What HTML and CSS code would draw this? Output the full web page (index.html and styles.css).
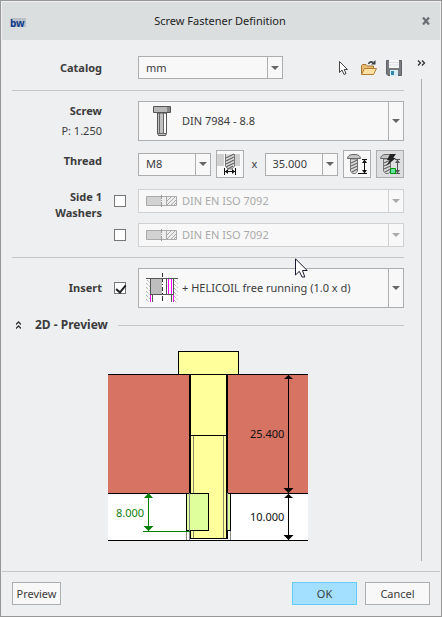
FILE: index.html
```html
<!DOCTYPE html>
<html lang="en">
<head>
<meta charset="utf-8">
<title>Screw Fastener Definition</title>
<link rel="stylesheet" href="styles.css">
</head>
<body>
<form class="dialog">
  <header class="titlebar">
    <svg class="logo" viewBox="0 0 20 14" role="img" aria-label="bw"><rect x="1" y="2" width="15" height="9" fill="#b9bfc6"/><text x="0" y="11" class="logo-text">bw</text></svg>
    <h1 class="title">Screw Fastener Definition</h1>
    <button type="button" class="plain close" aria-label="Close"><svg width="8" height="8" viewBox="0 0 8 8"><path d="M1 .5L7 7.5M7 .5L1 7.5" stroke="#6c6c74" stroke-width="2.2"/></svg></button>
  </header>

  <div class="content">
    <main class="fields">
      <div class="row row-catalog">
        <label class="label" for="catalog">Catalog</label>
        <div class="controls spread">
          <div class="combo combo-catalog"><select id="catalog"><option>mm</option></select></div>
          <div class="tools">
            <button type="button" class="plain" aria-label="Select"><svg width="16" height="16" viewBox="0 0 16 16"><path d="M3.5 1.5V12.5L6 10L8 14.5L10 13.5L8.2 9.5H11.5Z" fill="#fff" stroke="#444"/></svg></button>
            <button type="button" class="plain" aria-label="Open"><svg width="18" height="16" viewBox="0 0 18 16"><path d="M1.5 14V5.5L2.5 4.5H6L7.5 6H13.5V8" fill="#e5bd73" stroke="#a8752f"/><path d="M1.5 14.5L4.5 8.5H16.5L13.5 14.5Z" fill="#ffe0a0" stroke="#b27e38"/><path d="M8.5 4Q10 .7 13 2.5" fill="none" stroke="#3c414a" stroke-width="1.6"/><path d="M11 4.5H15.5V0Z" fill="#3c414a"/></svg></button>
            <button type="button" class="plain" aria-label="Save"><svg width="16" height="16" viewBox="0 0 16 16"><path d="M.5 .5H15.5V15.5H2L.5 14Z" fill="#777b80" stroke="#5e6266"/><rect x="3" y="0" width="10" height="8" fill="#f5f6f7"/><path d="M3 2.5H13M3 5H13" stroke="#dce1e4"/><rect x="4" y="10" width="8" height="6" fill="#d9edf5"/><rect x="5" y="11" width="3" height="4" fill="#3289ad"/></svg></button>
          </div>
        </div>
      </div>

      <hr class="rule">

      <div class="row row-screw">
        <div class="label"><label for="screw">Screw</label><span class="pitch">P: 1.250</span></div>
        <div class="controls">
          <div class="combo tall with-icon">
            <svg class="combo-icon screw-icon" viewBox="0 0 32 32"><path d="M7.5 1.5H24.5V7.5H7.5Z" fill="#b8b8b8" stroke="#555"/><path d="M21 2H24V7H21Z" fill="#888"/><path d="M11.500 8V28.500L12.500 30.500H19.500L20.500 28.500V8Z" fill="#c0c0c0" stroke="#555"/><path d="M18 9H20V28H18Z" fill="#fff"/><path d="M17.500 8V29M13.500 8V29M11.500 28.500H20.500" stroke="#666"/></svg>
            <select id="screw"><option>DIN 7984 - 8.8</option></select>
          </div>
        </div>
      </div>

      <div class="row row-thread">
        <label class="label" for="thread">Thread</label>
        <div class="controls spread">
          <div class="combo combo-small"><select id="thread"><option>M8</option></select></div>
          <button type="button" class="square" aria-label="Thread diameter"><svg width="26" height="26" viewBox="0 0 26 26"><path d="M0 3H7V15H0ZM18 3H23V15H18Z" fill="#d0d0d0"/><path d="M8.500 3H17.500V15L15 18H11L8.500 15Z" fill="#ddd"/><path d="M9 7L17 3M9 10L17 6M9 13L17 9M9 16L17 12M11 18L16 15" stroke="#666" stroke-width="1.3"/><path d="M8.500 3V15L11 18H15L17.500 15V3" fill="none" stroke="#777"/><path d="M7.500 17V24M18.500 17V24M8 20.500H18" stroke="#111"/><path d="M8 20.500L11 18V23ZM18 20.500L15 18V23Z" fill="#111"/></svg></button>
          <span class="times">x</span>
          <div class="combo combo-small"><select id="length" aria-label="Length"><option>35.000</option></select></div>
          <button type="button" class="square" aria-label="Set length"><svg width="26" height="26" viewBox="0 0 26 26"><path d="M6.500 8V20L8.500 22.500H11.500L13.500 20V8Z" fill="#ddd" stroke="#777"/><path d="M7 12L13.500 9M7 15L13.500 12M7 18L13.500 15M8 21L13.500 18" stroke="#666" stroke-width="1.300"/><path d="M3.500 7.500Q4 3.500 9 3.500H11Q16 3.500 16.500 7.500Z" fill="#c5c5c5" stroke="#666"/><path d="M18 8.500H23M14 22.500H23M20.500 9V22" stroke="#111"/><path d="M20.500 8.500L18 12H23ZM20.500 22.500L18 19H23Z" fill="#111"/></svg></button>
          <button type="button" class="square pressed" aria-label="Automatic length"><svg width="26" height="26" viewBox="0 0 26 26"><path d="M6.500 8V20L8.500 22.500H11.500L13.500 20V8Z" fill="#ddd" stroke="#777"/><path d="M7 12L13.500 9M7 15L13.500 12M7 18L13.500 15M8 21L13.500 18" stroke="#666" stroke-width="1.300"/><path d="M3.500 7.500Q4 3.500 9 3.500H11Q16 3.500 16.500 7.500Z" fill="#c5c5c5" stroke="#666"/><path d="M18 8.500H23M14 22.500H23M20.500 9V22" stroke="#555"/><path d="M20.500 8.500L18 12H23ZM20.500 22.500L18 19H23Z" fill="#555"/><path d="M13 3H19L16 7H19L9 15L13 9H10Z" fill="#222"/><path d="M13.500 17.500H18.500V22.500H13.500Z" fill="#66dfa0" stroke="#00980c"/></svg></button>
        </div>
      </div>

      <div class="row row-washers">
        <div class="label">Side 1<br>Washers</div>
        <div class="washers">
          <div class="washer">
            <input type="checkbox" aria-label="Use first washer">
            <div class="combo medium with-icon disabled">
              <svg class="combo-icon" viewBox="0 0 32 12"><path d="M.5 1.500H30.500V10.500H.5Z" fill="#eee" stroke="#aaa"/><path d="M1 2H15V10H1Z" fill="#d2d2d2"/><path d="M20.500 2V10M21 6L25 2M21 10L29 2M25 10L30 5M28 10L30 8" stroke="#aaa"/><path d="M15.500 0V4M15.500 5V6M15.500 7V12" stroke="#999"/></svg>
              <select aria-label="First washer" disabled><option>DIN EN ISO 7092</option></select>
            </div>
          </div>
          <div class="washer">
            <input type="checkbox" aria-label="Use second washer">
            <div class="combo medium with-icon disabled">
              <svg class="combo-icon" viewBox="0 0 32 12"><path d="M.5 1.500H30.500V10.500H.5Z" fill="#eee" stroke="#aaa"/><path d="M1 2H15V10H1Z" fill="#d2d2d2"/><path d="M20.500 2V10M21 6L25 2M21 10L29 2M25 10L30 5M28 10L30 8" stroke="#aaa"/><path d="M15.500 0V4M15.500 5V6M15.500 7V12" stroke="#999"/></svg>
              <select aria-label="Second washer" disabled><option>DIN EN ISO 7092</option></select>
            </div>
          </div>
        </div>
      </div>

      <hr class="rule">

      <div class="row row-insert">
        <label class="label" for="use-insert">Insert</label>
        <input type="checkbox" id="use-insert" checked>
        <div class="combo tall with-icon">
          <svg class="combo-icon insert-icon" viewBox="0 0 32 32"><path d="M0 11L4 15M0 15L4 19M0 19L4 23M0 23L4 27M0 27L3 30M1 8L4 11M28 8L32 12M28 12L32 16M28 16L32 20M28 20L32 24M28 24L32 28M28 28L31 31" stroke="#999" stroke-dasharray="1 1"/><path d="M5 7H27V31H5Z" fill="#fff"/><path d="M5 7H16V23H5Z" fill="#bebebe"/><path d="M0 6.500H32M4.500 7V23M4.500 22.500H27.500M20.500 7V22M27.500 7V23" stroke="#555"/><path d="M6.500 23V30M25.500 23V30" stroke="#555"/><path d="M4.500 23V30M22.500 7V22M25.500 7V22M27.500 23V30" stroke="#f0f"/><path d="M16.500 1V5M16.500 7V10M16.500 12V13M16.500 15V19M16.500 21V22M16.500 24V29" stroke="#333"/></svg>
          <select aria-label="Insert type"><option>+ HELICOIL free running (1.0 x d)</option></select>
        </div>
        <svg class="pointer" viewBox="0 0 13 20" aria-hidden="true"><path d="M.5 .8V17L4.300 13.300L7 19H9.800L7.500 12.500H12.200Z" fill="#fff" stroke="#1b1b30"/></svg>
      </div>

      <section class="preview">
        <div class="section-head">
          <button type="button" class="plain fold" aria-label="Collapse preview"><svg width="5" height="9" viewBox="0 0 5 9"><path d="M0 3.500L2.500 1L5 3.500M0 7.500L2.500 5L5 7.500" fill="none" stroke="#333" stroke-width="1.300"/></svg></button>
          <h2 class="section-title">2D - Preview</h2>
          <hr class="rule">
        </div>
        <svg class="drawing" viewBox="108 350 200 192" role="img" aria-label="Section through the screw joint">
          <g shape-rendering="crispEdges" fill="none" stroke="#000">
            <path d="M108 493H308V541H108Z" fill="#fff" stroke="none"/>
            <path d="M108 374H308V493H108Z" fill="#d67362" stroke="none"/>
            <path d="M178.500 351.500H238.500V374.500H178.500Z" fill="#ffff9c"/>
            <path d="M190 375H228V539H190Z" fill="#ffff9c" stroke="none"/>
            <path d="M108 374.500H308M190 435.500H228M108 540.500H308"/>
            <path d="M108 493.500H187M228 493.500H308"/>
            <path d="M190 375V493M227 375V539" stroke-width="2"/>
            <path d="M190.500 530V538.500H228"/>
            <path d="M193.500 436V538M223.500 436V538" stroke="#8a8a68"/>
            <path d="M186.500 493.500H208.500V530.500H186.500ZM227.500 493.500H230.500V530.500H227.500Z" fill="#deff9c"/>
            <path d="M189.500 493V540M186.500 531V540M227.500 493V530M230.500 531V540" stroke="#888"/>
            <path d="M288.500 375V540"/>
            <path d="M148.500 494V531M143 531.500H190" stroke="#008000"/>
          </g>
          <path d="M288.500 375L284 379H293ZM288.500 493L283.500 488H293.500ZM288.500 494L284 498H293ZM288.500 540L283.500 535H293.500Z"/>
          <path d="M148.500 493L144 498H153ZM148.500 531L143.500 526H153.500Z" fill="#008000"/>
          <text x="116" y="517" class="green">8.000</text>
          <text x="250" y="438">25.400</text>
          <text x="250" y="521">10.000</text>
        </svg>
      </section>
    </main>

    <aside class="side">
      <button type="button" class="plain" aria-label="More"><svg width="9" height="6" viewBox="0 0 9 6"><path d="M1 .5L3.500 3L1 5.500M5 .5L7.500 3L5 5.500" fill="none" stroke="#333" stroke-width="1.300"/></svg></button>
      <div class="side-line"></div>
    </aside>
  </div>

  <footer class="footer">
    <button type="button" class="push push-fit">Preview</button>
    <button type="submit" class="push primary">OK</button>
    <button type="button" class="push">Cancel</button>
  </footer>
</form>
</body>
</html>
```
FILE: styles.css
```css
* { box-sizing: border-box; }
body {
  margin: 0;
  font: 11px/16px "Noto Sans", "Open Sans", sans-serif;
  color: #3c3c3c;
}
svg { display: block; }
button, select { font: inherit; color: inherit; }
.dialog {
  min-height: 100vh;
  display: flex;
  flex-direction: column;
  border: 1px solid #979797;
  background: #eeeff1;
}
.titlebar {
  display: flex;
  align-items: center;
  height: 38px;
  margin: 1px 1px 0;
  padding: 0 10px 0 8px;
  background: #dadede;
}
.logo { width: 20px; height: 14px; margin-top: 4px; }
.logo-text { font: bold 10px "Noto Sans", sans-serif; fill: #113c8c; }
.title { flex: 1; margin: 0; padding-right: 12px; font-size: 11px; font-weight: 400; text-align: center; color: #222; }
.plain { display: block; padding: 0; border: 0; background: none; }

.content { flex: 1; display: flex; padding: 0 15px 10px 11px; }
.fields { flex: 1; min-width: 0; padding-top: 16px; }
.rule { margin: 0; border: 0; border-top: 1px solid #c5c6c8; }

.row {
  position: relative;
  display: grid;
  grid-template-columns: 90px 12px minmax(0, 1fr);
  column-gap: 12px;
  align-items: center;
}
.label { font-weight: 700; text-align: right; }
.controls { grid-column: 3; display: flex; align-items: center; }
.spread { justify-content: space-between; }
.row-catalog { padding-bottom: 11px; }
.row-screw { padding-top: 10px; }
.row-screw .label { line-height: 20px; }
.pitch { display: block; font-weight: 400; }
.row-thread { padding-top: 9px; }
.row-thread .label { padding-bottom: 6px; }
.row-washers { align-items: start; padding: 11px 0 10px; }
.row-insert { padding-top: 10px; }
.washers { grid-column: 2 / 4; display: grid; gap: 10px; }
.washer { display: grid; grid-template-columns: 12px minmax(0, 1fr); column-gap: 12px; align-items: center; }

.combo { position: relative; width: 100%; height: 23px; }
.combo-catalog { width: 145px; }
.combo-small { width: 73px; }
.medium { height: 24px; }
.tall { height: 40px; }
.combo select {
  display: block;
  width: 100%;
  height: 100%;
  padding: 0 16px 0 7px;
  border: 1px solid #adaeb0;
  border-radius: 0;
  appearance: none;
  background: linear-gradient(#adaeb0, #adaeb0) right 14px top / 1px 100% no-repeat #f8f8f8;
}
.combo.with-icon select { padding-left: 43px; }
.combo::after {
  content: "";
  position: absolute;
  right: 4px;
  top: calc(50% - 2px);
  border: 4px solid transparent;
  border-top-color: #666;
  border-bottom: 0;
  pointer-events: none;
}
.combo-icon { position: absolute; left: 8px; top: 6px; width: 32px; height: 12px; }
.tall .combo-icon { top: 4px; height: 32px; }
.combo.disabled select {
  opacity: 1;
  color: #aaa;
  border-color: #d0d1d3;
  background-image: linear-gradient(#d0d1d3, #d0d1d3);
}
.disabled::after { border-top-color: #aaa; }

.tools { display: flex; gap: 8px; margin-right: 2px; }
.square {
  width: 28px;
  height: 28px;
  padding: 0;
  border: 1px solid #adaeb0;
  background: #f8f8f8;
}
.pressed { background: #dddee0; }
.times { padding: 0 2px; }
input[type="checkbox"] {
  appearance: none;
  width: 12px;
  height: 12px;
  margin: 0;
  border: 1px solid #777;
  background: #fff;
}
input[type="checkbox"]:checked::after {
  content: "";
  display: block;
  width: 4px;
  height: 8px;
  margin: 0 0 0 3px;
  border: solid #222;
  border-width: 0 2px 2px 0;
  transform: rotate(40deg);
}
.pointer { position: absolute; left: 283px; top: 0; width: 13px; height: 20px; }

.section-head { display: flex; align-items: center; padding: 8px 0 0 4px; }
.section-title { margin: 0 10px 0 14px; font-size: 12px; line-height: 18px; }
.section-head .rule { flex: 1; }
.drawing { width: 200px; height: 192px; margin: 16px auto 0; }
.drawing text { font-size: 11px; fill: #111; }
.drawing .green { fill: #108010; }

.side { display: flex; flex-direction: column; align-items: center; width: 9px; margin-left: 13px; padding-top: 20px; }
.side-line { flex: 1; width: 1px; margin-top: 13px; background: #adaeb0; }

.footer { display: flex; gap: 8px; margin: 0 1px; padding: 10px 10px 11px; border-top: 1px solid #c5c6c8; }
.push { width: 65px; height: 23px; padding: 0; border: 1px solid #adaeb0; background: #f8f8f8; }
.push-fit { width: 49px; margin-right: auto; }
.primary { border-color: #66ccff; background: #a3e0ff; }
```
